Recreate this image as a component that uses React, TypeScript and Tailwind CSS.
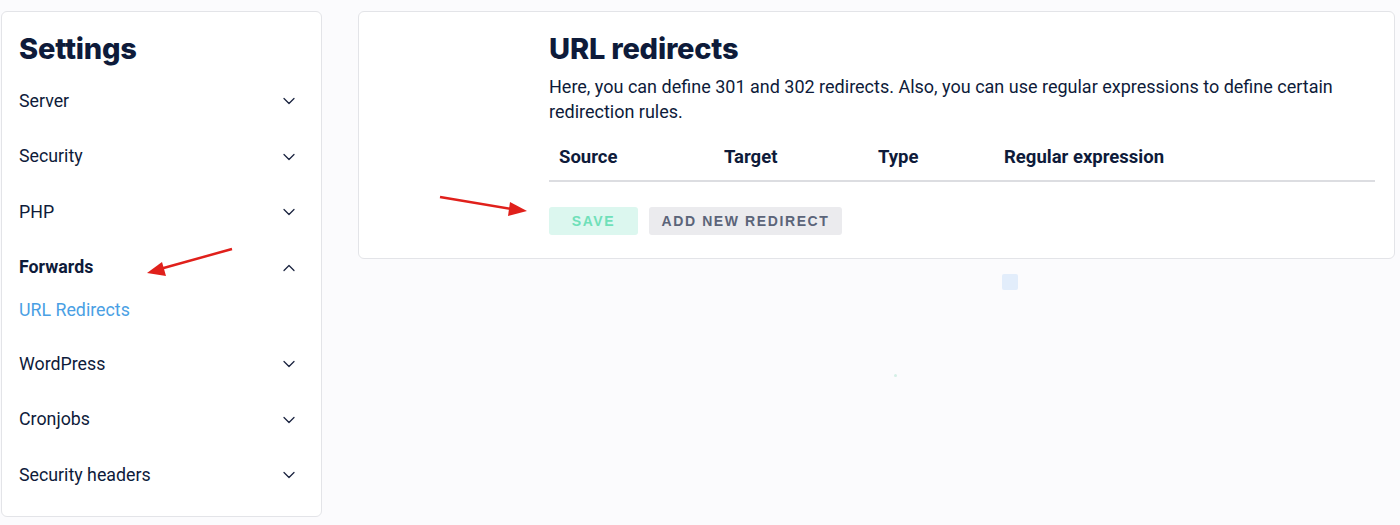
import { ChevronDown, ChevronUp } from "lucide-react";

const MENU = [
  { label: "Server" },
  { label: "Security" },
  { label: "PHP" },
  { label: "Forwards", open: true, children: ["URL Redirects"] },
  { label: "WordPress" },
  { label: "Cronjobs" },
  { label: "Security headers" },
];

const COLUMNS = [
  { label: "Source", w: "w-[165px]" },
  { label: "Target", w: "w-[154px]" },
  { label: "Type", w: "w-[126px]" },
  { label: "Regular expression", w: "" },
];

export default function App() {
  return (
    <div className="relative h-[525px] w-[1400px] overflow-hidden bg-[#fbfbfd] font-['Roboto',sans-serif] text-[#0e1b3a]">
      <div className="flex items-start gap-[36px] pl-[1px] pt-[11px]">
        {/* Sidebar */}
        <div className="w-[321px] rounded-[6px] border border-[#e3e4e8] bg-white pb-[13px] pl-[17px] pr-[22px] pt-[19px]">
          <h1 className="font-['Inter',sans-serif] text-[29px] font-extrabold leading-[36px] tracking-[-0.2px]">Settings</h1>
          <ul className="mt-[6.5px]">
            {MENU.map((item) => (
              <li key={item.label}>
                <div className="flex h-[55.5px] items-center justify-between">
                  <span className={item.open ? "text-[17.8px] font-bold" : "text-[17.8px]"}>{item.label}</span>
                  {item.open ? (
                    <ChevronUp size={20} strokeWidth={1.5} className="text-[#1b2440]" />
                  ) : (
                    <ChevronDown size={20} strokeWidth={1.5} className="text-[#1b2440]" />
                  )}
                </div>
                {item.children?.map((c) => (
                  <div key={c} className="h-[41px] text-[17.8px] leading-[27px] text-[#4a9fe4]">
                    {c}
                  </div>
                ))}
              </li>
            ))}
          </ul>
        </div>

        {/* Main card */}
        <div className="w-[1037px] rounded-[6px] border border-[#e3e4e8] bg-white pb-[23px] pl-[190px] pr-[19px] pt-[19px]">
          <h2 className="font-['Inter',sans-serif] text-[29px] font-extrabold leading-[36px] tracking-[-0.2px]">URL redirects</h2>
          <p className="mt-[7px] text-[18px] leading-[25px]">
            Here, you can define 301 and 302 redirects. Also, you can use regular expressions to define certain redirection rules.
          </p>
          <div className="mt-[12px] flex h-[46px] items-center border-b-2 border-[#dcdde1] pl-[10px] text-[18.5px] font-bold">
            {COLUMNS.map((c) => (
              <div key={c.label} className={c.w}>
                {c.label}
              </div>
            ))}
          </div>
          <div className="mt-[25px] flex gap-[11px]">
            <button className="h-[28px] w-[89px] rounded-[3px] bg-[#dcf7ef] font-['Liberation_Sans',sans-serif] text-[14px] font-bold tracking-[1.6px] text-[#6fe0b9]">
              SAVE
            </button>
            <button className="h-[28px] w-[193px] rounded-[3px] bg-[#ebebee] font-['Liberation_Sans',sans-serif] text-[14px] font-bold tracking-[1.6px] text-[#5b6479]">
              ADD NEW REDIRECT
            </button>
          </div>
        </div>
      </div>

      {/* faint loading artifacts */}
      <div className="absolute left-[1002px] top-[274px] h-[16px] w-[16px] rounded-[2px] bg-[#e2edfb]" />
      <div className="absolute left-[894px] top-[374px] h-[3px] w-[3px] rounded-full bg-[#d4efe6]" />

      {/* annotation arrows */}
      <svg className="pointer-events-none absolute left-0 top-0" width="1400" height="525">
        <line x1="232" y1="249" x2="160" y2="269" stroke="#e0201b" strokeWidth="2.5" />
        <polygon points="147,273 162,262 166,276" fill="#e0201b" />
        <line x1="440" y1="197" x2="512" y2="209" stroke="#e0201b" strokeWidth="2.5" />
        <polygon points="527,211 510,202 508,216" fill="#e0201b" />
      </svg>
    </div>
  );
}
